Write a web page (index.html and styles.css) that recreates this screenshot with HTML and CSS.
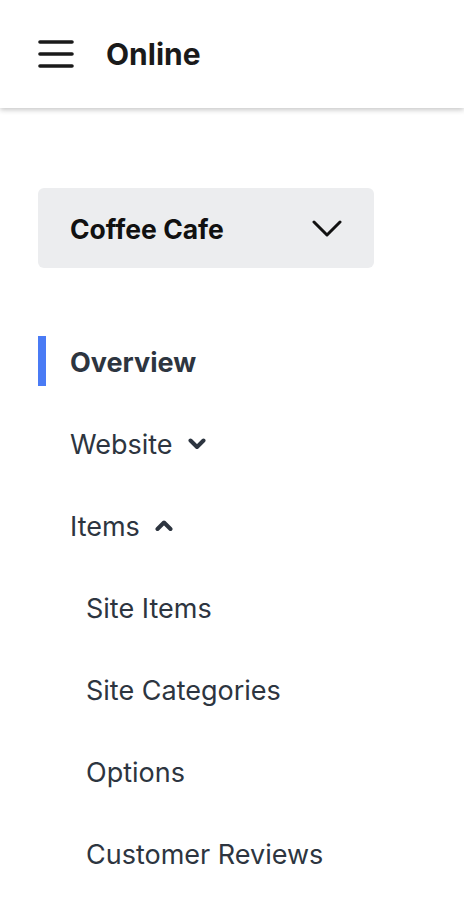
FILE: index.html
```html
<!DOCTYPE html>
<html>
<head>
<meta charset="utf-8">
<link rel="stylesheet" href="styles.css">
</head>
<body>
<header class="topbar">
  <svg class="burger" width="36" height="30" viewBox="0 0 36 30"><path d="M2 3H34M2 15H34M2 27H34" stroke="#1a1a1a" stroke-width="3.6" stroke-linecap="round" fill="none"/></svg>
  <h1 class="title">Online</h1>
</header>
<main class="side">
  <button class="picker">
    <span class="picker-label">Coffee Cafe</span>
    <svg width="30" height="18" viewBox="0 0 30 18"><path d="M2 2L15 15L28 2" stroke="#111" stroke-width="3" fill="none" stroke-linecap="round" stroke-linejoin="round"/></svg>
  </button>
  <nav class="nav">
    <div class="item active">Overview</div>
    <div class="item">Website
      <svg class="chev" width="18" height="14" viewBox="0 0 18 14"><path d="M2.5 3.5L9 10L15.5 3.5" stroke="#2d3540" stroke-width="4" fill="none" stroke-linecap="round" stroke-linejoin="round"/></svg>
    </div>
    <div class="item">Items
      <svg class="chev" width="18" height="14" viewBox="0 0 18 14"><path d="M2.5 10L9 3.5L15.5 10" stroke="#2d3540" stroke-width="4" fill="none" stroke-linecap="round" stroke-linejoin="round"/></svg>
    </div>
    <div class="item sub">Site Items</div>
    <div class="item sub">Site Categories</div>
    <div class="item sub">Options</div>
    <div class="item sub">Customer Reviews</div>
  </nav>
</main>
</body>
</html>
```
FILE: styles.css
```css
* { box-sizing: border-box; }
body {
  margin: 0;
  font-family: Inter, Lato, sans-serif;
  background: #fff;
  color: #2d3540;
}
.topbar {
  height: 108px;
  display: flex;
  align-items: center;
  gap: 32px;
  padding-left: 38px;
  background: #fff;
  box-shadow: 0 2px 5px rgba(0,0,0,0.22);
}
.burger { display: block; }
.title {
  margin: 0;
  font-size: 30px;
  font-weight: 700;
  color: #1a1a1a;
}
.side {
  padding: 80px 0 0 38px;
}
.picker {
  width: 336px;
  height: 80px;
  border: none;
  border-radius: 6px;
  background: #ecedef;
  display: flex;
  align-items: center;
  justify-content: space-between;
  padding: 2px 32px 0 32px;
  font-family: inherit;
}
.picker-label {
  font-size: 26.5px;
  font-weight: 700;
  color: #111;
}
.nav {
  margin-top: 68px;
  display: flex;
  flex-direction: column;
}
.item {
  height: 50px;
  margin-bottom: 32px;
  display: flex;
  align-items: center;
  gap: 15px;
  padding-left: 32px;
  padding-top: 2px;
  font-size: 27px;
}
.item.active {
  border-left: 8px solid #4a7bf5;
  font-weight: 700;
  padding-left: 24px;
}
.item.sub { padding-left: 48px; }
.chev { display: block; }
```
